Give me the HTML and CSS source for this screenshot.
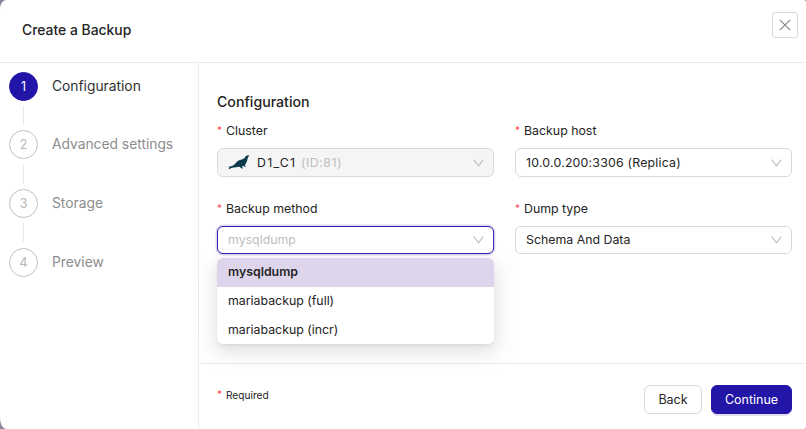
FILE: index.html
```html
<!DOCTYPE html>
<html lang="en">
<head>
<meta charset="utf-8">
<title>Create a Backup</title>
<link rel="stylesheet" href="styles.css">
</head>
<body>
<div class="dialog">
  <header class="header">
    <h1 class="title">Create a Backup</h1>
    <button class="close" aria-label="Close"><svg width="12" height="12" viewBox="0 0 12 12"><path d="M.8.8 11.2 11.2M11.2.8.8 11.2"/></svg></button>
  </header>
  <div class="body">
    <ol class="steps">
      <li class="step active"><span class="num">1</span><span class="name">Configuration</span></li>
      <li class="step"><span class="num">2</span><span class="name">Advanced settings</span></li>
      <li class="step"><span class="num">3</span><span class="name">Storage</span></li>
      <li class="step"><span class="num">4</span><span class="name">Preview</span></li>
    </ol>
    <main class="main">
      <section class="content">
        <h2 class="heading">Configuration</h2>
        <div class="grid">
          <div class="field">
            <label class="label"><i>*</i><span>Cluster</span></label>
            <div class="select disabled">
              <svg class="seal" width="22" height="15" viewBox="0 0 22 15"><path d="M21.4.3C19.6.1 18 .6 17.2 1.9 16.4 3.2 15.2 4 13.6 4.5 11 5.1 9.3 6.2 7.6 8.2 6 10 4.3 11 2.4 11.4L.2 11.7l1.1.7L.5 14.2c1.5-.1 2.5-1 3.8-1.4 2.4-.8 5-.6 7.3-1.1l1.6 1.5 2 .3-1.2-2.1 1.1-.6 1.5.9 1.2.1-.9-1.9c1.3-1.4 2-3.2 2.4-4.9.3-1.6.6-2.8 2.1-4.7z"/></svg>
              <span class="value"><span class="cluster">D1_C1</span><em>(ID:81)</em></span>
              <svg class="arrow" width="11" height="8" viewBox="0 0 11 8"><path d="M.8.6 5.5 6.8 10.2.6"/></svg>
            </div>
          </div>
          <div class="field">
            <label class="label"><i>*</i><span>Backup host</span></label>
            <div class="select">
              <span class="value host">10.0.0.200:3306 (Replica)</span>
              <svg class="arrow" width="11" height="8" viewBox="0 0 11 8"><path d="M.8.6 5.5 6.8 10.2.6"/></svg>
            </div>
          </div>
          <div class="field">
            <label class="label"><i>*</i><span>Backup method</span></label>
            <div class="select short focused">
              <span class="value">mysqldump</span>
              <svg class="arrow" width="11" height="8" viewBox="0 0 11 8"><path d="M.8.6 5.5 6.8 10.2.6"/></svg>
            </div>
            <div class="menu">
              <div class="option selected">mysqldump</div>
              <div class="option">mariabackup (full)</div>
              <div class="option">mariabackup (incr)</div>
            </div>
          </div>
          <div class="field">
            <label class="label"><i>*</i><span>Dump type</span></label>
            <div class="select short">
              <span class="value">Schema And Data</span>
              <svg class="arrow" width="11" height="8" viewBox="0 0 11 8"><path d="M.8.6 5.5 6.8 10.2.6"/></svg>
            </div>
          </div>
        </div>
      </section>
      <footer class="footer">
        <span class="required"><i>*</i><span>Required</span></span>
        <button class="btn back">Back</button>
        <button class="btn primary">Continue</button>
      </footer>
    </main>
  </div>
</div>
</body>
</html>
```

FILE: styles.css
```css
* { box-sizing: border-box; }
body { margin: 0; background: #88829e; font-family: Inter, sans-serif; font-size: 12.35px; color: #242424; overflow: hidden; }
i, em { font-style: normal; }
button { font-family: inherit; margin: 0; }
.dialog { height: 429px; background: #fff; border-radius: 6px 2px 2px 6px / 9px 2px 2px 11px; overflow: hidden; display: flex; flex-direction: column; }
.header { height: 63px; flex: none; border-bottom: 1px solid #ececec; display: flex; justify-content: space-between; padding: 12px 8px 0 22px; }
.title { margin: 9px 0 0; font-size: 13.9px; line-height: 18px; font-weight: 500; }
.close { width: 26px; height: 26px; padding: 0; border: 1px solid #d9d9d9; border-radius: 3px; background: #fff; display: flex; align-items: center; justify-content: center; }
.close svg { fill: none; stroke: #858585; stroke-width: 1.2; }
.body { flex: 1; display: flex; min-height: 0; }
.steps { width: 198px; flex: none; margin: 0; padding: 8.6px 0 0 9px; list-style: none; }
.step { height: 58.66px; display: flex; gap: 14px; position: relative; color: #8c8c8c; }
.step:not(:last-child)::after { content: ""; position: absolute; left: 14px; top: 34.5px; width: 1px; height: 19px; background: #e8e8e8; }
.num { width: 29px; height: 29px; flex: none; border: 1px solid #bfbfbf; border-radius: 50%; color: #b5b5b5; font-size: 12.4px; line-height: 27px; text-align: center; }
.name { font-size: 13.8px; line-height: 28.5px; white-space: nowrap; }
.active { color: #303030; }
.active .num { background: #2215a8; border-color: #2215a8; color: #fff; }
.main { flex: 1; border-left: 1px solid #ececec; display: flex; flex-direction: column; min-width: 0; }
.content { height: 300px; padding: 29px 14px 0 18px; }
.heading { margin: 0; font-size: 14.15px; line-height: 20px; font-weight: 500; }
.grid { display: grid; grid-template-columns: 277px 277px; column-gap: 21px; grid-auto-rows: 78px; margin-top: 9px; }
.field { position: relative; }
.label { display: flex; gap: 3px; height: 27px; line-height: 20px; white-space: nowrap; }
.label i, .required i { color: #ff4d4f; width: 6px; font-size: 10px; line-height: 18px; }
.select { height: 29px; border: 1px solid #d9d9d9; border-radius: 6px; background: #fff; display: flex; align-items: center; padding: 0 9px 0 10px; }
.short { height: 28px; }
.value { flex: 1; line-height: 20px; white-space: nowrap; }
.host { letter-spacing: .2px; }
.arrow { fill: none; stroke: #bdbdbd; stroke-width: 1.1; }
.disabled { background: #f5f5f5; }
.seal { fill: #0b3a4a; margin-right: 7px; }
.cluster { display: inline-block; width: 44px; letter-spacing: 1.25px; }
em { color: #bdbdbd; letter-spacing: .5px; }
.focused { border-color: #3d1fb5; box-shadow: 0 0 0 1.5px #dcd7ef; }
.focused .value { color: #bfbfbf; }
.menu { position: absolute; z-index: 2; left: 0; top: 59px; width: 277px; height: 86px; border-radius: 6px; background: #fff; overflow: hidden; box-shadow: 0 5px 14px rgba(0,0,0,.08), 0 3px 5px -3px rgba(0,0,0,.12), 0 8px 25px 7px rgba(0,0,0,.05); display: grid; grid-template-rows: 29px 29px 28px; }
.option { padding-left: 11px; line-height: 28px; }
.selected { background: #ded5ec; font-weight: 600; }
.footer { flex: 1; border-top: 1px solid #ececec; display: flex; align-items: flex-start; padding: 21px 14px 0 18px; }
.required { display: flex; gap: 3px; flex: 1; font-size: 10.15px; line-height: 21px; }
.btn { height: 29px; border: 1px solid #d9d9d9; border-radius: 6px; background: #fff; color: #242424; font-size: 12.5px; line-height: 27px; padding: 0; }
.back { width: 58px; margin-right: 9px; box-shadow: 0 1px 1px rgba(0,0,0,.02); }
.primary { width: 81px; background: #2215a8; border-color: #2215a8; color: #fff; box-shadow: 0 2px 0 #e4dff1; }
```
